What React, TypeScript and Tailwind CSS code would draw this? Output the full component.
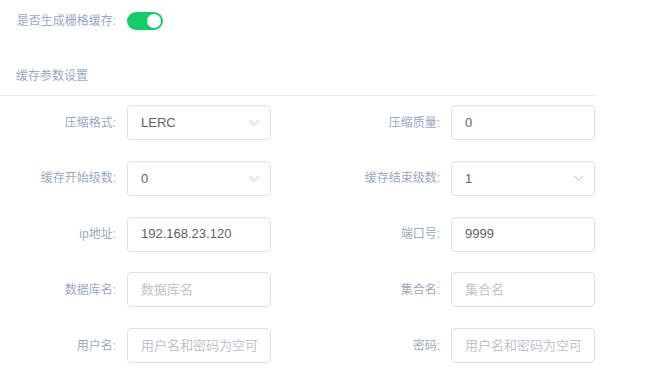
import { useState } from "react";

type Field = {
  label: string;
  value?: string;
  placeholder?: string;
  select?: boolean;
};

const fields: Field[] = [
  { label: "压缩格式:", value: "LERC", select: true },
  { label: "压缩质量:", value: "0" },
  { label: "缓存开始级数:", value: "0", select: true },
  { label: "缓存结束级数:", value: "1", select: true },
  { label: "ip地址:", value: "192.168.23.120" },
  { label: "端口号:", value: "9999" },
  { label: "数据库名:", placeholder: "数据库名" },
  { label: "集合名:", placeholder: "集合名" },
  { label: "用户名:", placeholder: "用户名和密码为空可以不填" },
  { label: "密码:", placeholder: "用户名和密码为空可以不填" },
];

function Chevron() {
  return (
    <svg width="11" height="7" viewBox="0 0 11 7" className="shrink-0">
      <polyline
        points="1,1 5.5,5.5 10,1"
        fill="none"
        stroke="#c0c4cc"
        strokeWidth="1"
      />
    </svg>
  );
}

function FormItem({ field }: { field: Field }) {
  return (
    <div className="flex items-center">
      <label className="w-[116px] shrink-0 text-right text-[12px] text-[#99a9bf]">
        {field.label}
      </label>
      <div className="ml-[11px] flex h-[35px] w-[144px] items-center rounded-[4px] border border-[#dcdfe6] bg-white pl-[13px] pr-[10px]">
        <input
          className="min-w-0 flex-1 bg-transparent text-[13px] text-[#606266] placeholder-[#c0c4cc] outline-none"
          defaultValue={field.value}
          placeholder={field.placeholder}
          readOnly={field.select}
        />
        {field.select && <Chevron />}
      </div>
    </div>
  );
}

export default function App() {
  const [cache, setCache] = useState(true);

  return (
    <div
      className="min-h-screen w-[646px] bg-white"
      style={{ fontFamily: '"Liberation Sans", "Noto Sans CJK SC", sans-serif' }}
    >
      {/* 是否生成缓存 */}
      <div className="flex h-[40px] items-center pt-[1px]">
        <span className="w-[116px] text-right text-[12px] text-[#99a9bf]">
          是否生成栅格缓存:
        </span>
        <button
          type="button"
          onClick={() => setCache(!cache)}
          className={`ml-[11px] flex h-[18px] w-[36px] items-center rounded-full p-[2px] ${
            cache ? "justify-end bg-[#13ce66]" : "justify-start bg-[#dcdfe6]"
          }`}
        >
          <span className="h-[14px] w-[14px] rounded-full bg-white" />
        </button>
      </div>

      {/* 缓存参数设置 */}
      <div className="w-[595px] border-b border-[#e4e7ed] pb-[12px] pl-[16px] pt-[29px] text-[12px] leading-[14px] text-[#99a9bf]">
        缓存参数设置
      </div>

      <div className="grid w-[646px] grid-cols-[324px_322px] gap-y-[20.75px] pt-[9px]">
        {fields.map((f) => (
          <FormItem key={f.label} field={f} />
        ))}
      </div>
    </div>
  );
}
